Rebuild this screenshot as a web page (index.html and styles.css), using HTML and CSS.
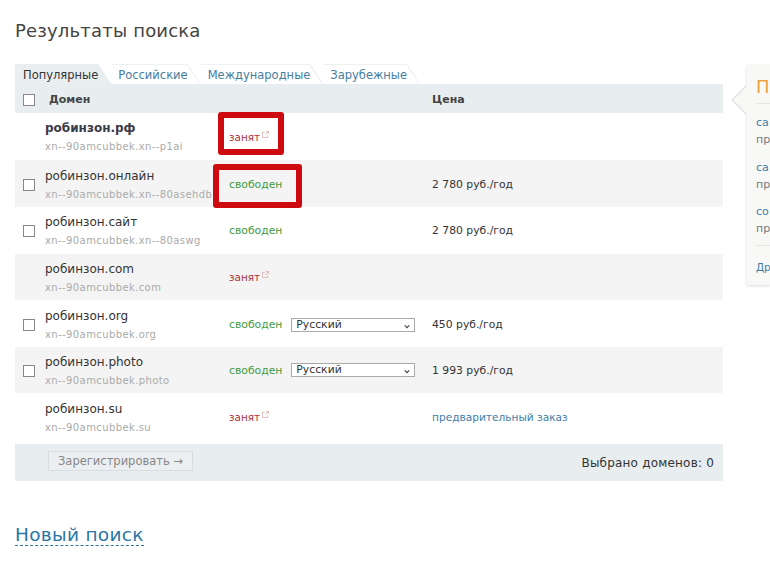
FILE: index.html
```html
<!DOCTYPE html>
<html lang="ru">
<head>
    <meta charset="UTF-8">
    <title>Результаты поиска</title>
    <link rel="stylesheet" href="styles.css">
</head>
<body>
    <div class="page">
        <h1>Результаты поиска</h1>
        <div class="columns">
            <div class="results">
                <div class="tabs">
                    <div class="tab active">Популярные</div>
                    <div class="tab">Российские</div>
                    <div class="tab">Международные</div>
                    <div class="tab">Зарубежные</div>
                </div>
                <div class="row head">
                    <span class="check"></span>
                    <div class="cell-domain">Домен</div>
                    <div></div>
                    <div>Цена</div>
                </div>
                <div class="row">
                    <div></div>
                    <div class="cell-domain"><b class="name bold">робинзон.рф</b><span class="puny">xn--90amcubbek.xn--p1ai</span></div>
                    <div class="status">
                        <span class="taken">занят</span>
                        <svg class="ext" viewBox="0 0 8 8"><path d="M3 1.5H.5v6h6V5M4.5.5h3v3M7.5.5 3.5 4.5" /></svg>
                        <span class="mark mark-one"></span>
                    </div>
                    <div></div>
                </div>
                <div class="row alt low">
                    <span class="check"></span>
                    <div class="cell-domain"><b class="name">робинзон.онлайн</b><span class="puny">xn--90amcubbek.xn--80asehdb</span></div>
                    <div class="status">
                        <span class="free">свободен</span>
                        <span class="mark mark-two"></span>
                    </div>
                    <div>2 780 руб./год</div>
                </div>
                <div class="row">
                    <span class="check"></span>
                    <div class="cell-domain"><b class="name">робинзон.сайт</b><span class="puny">xn--90amcubbek.xn--80aswg</span></div>
                    <div class="status"><span class="free">свободен</span></div>
                    <div>2 780 руб./год</div>
                </div>
                <div class="row alt tight">
                    <div></div>
                    <div class="cell-domain"><b class="name">робинзон.com</b><span class="puny">xn--90amcubbek.com</span></div>
                    <div class="status">
                        <span class="taken">занят</span>
                        <svg class="ext" viewBox="0 0 8 8"><path d="M3 1.5H.5v6h6V5M4.5.5h3v3M7.5.5 3.5 4.5" /></svg>
                    </div>
                    <div></div>
                </div>
                <div class="row low">
                    <span class="check"></span>
                    <div class="cell-domain"><b class="name">робинзон.org</b><span class="puny">xn--90amcubbek.org</span></div>
                    <div class="status">
                        <span class="free">свободен</span>
                        <div class="lang">
                            <select><option>Русский</option></select>
                            <svg viewBox="0 0 8 6"><path d="M1 1.500 4 4.500 7 1.500" /></svg>
                        </div>
                    </div>
                    <div>450 руб./год</div>
                </div>
                <div class="row alt tight">
                    <span class="check"></span>
                    <div class="cell-domain"><b class="name">робинзон.photo</b><span class="puny">xn--90amcubbek.photo</span></div>
                    <div class="status">
                        <span class="free">свободен</span>
                        <div class="lang">
                            <select><option>Русский</option></select>
                            <svg viewBox="0 0 8 6"><path d="M1 1.500 4 4.500 7 1.500" /></svg>
                        </div>
                    </div>
                    <div>1 993 руб./год</div>
                </div>
                <div class="row last">
                    <div></div>
                    <div class="cell-domain"><b class="name">робинзон.su</b><span class="puny">xn--90amcubbek.su</span></div>
                    <div class="status">
                        <span class="taken">занят</span>
                        <svg class="ext" viewBox="0 0 8 8"><path d="M3 1.5H.5v6h6V5M4.5.5h3v3M7.5.5 3.5 4.5" /></svg>
                    </div>
                    <div><a class="preorder">предварительный заказ</a></div>
                </div>
                <div class="foot">
                    <button>Зарегистрировать →</button>
                    <div class="count">Выбрано доменов: 0</div>
                </div>
            </div>
            <div class="side">
                <h3>П</h3>
                <ul>
                    <li><a>са</a><span>пр</span></li>
                    <li><a>са</a><span>пр</span></li>
                    <li><a>со</a><span>пр</span></li>
                </ul>
                <a class="more">Др</a>
            </div>
        </div>
        <h2><a>Новый поиск</a></h2>
    </div>
</body>
</html>
```

FILE: styles.css
```css
html, body {
    margin: 0;
    height: 576px;
    overflow: hidden;
    background: #fff;
}
body {
    font-family: "DejaVu Sans", Verdana, sans-serif;
    font-size: 10px;
    color: #333;
}
.page {
    padding: 20px 0 0 15px;
}
h1 {
    margin: 0 0 23px;
    height: 21px;
    font-size: 18px;
    line-height: 21px;
    font-weight: normal;
    color: #444;
    letter-spacing: 0.18px;
}
.columns {
    display: flex;
    align-items: flex-start;
    gap: 24px;
}
.results {
    flex: none;
    width: 708px;
}
.tabs {
    display: flex;
    height: 20px;
}
.tab {
    padding: 0 13px 0 7px;
    line-height: 21px;
    font-size: 11.5px;
    color: #467d9e;
    border-top: 1px solid #eef1f2;
    background: linear-gradient(to top right, transparent calc(50% - 1px), #e4e7e8 50%, transparent calc(50% + 1px)) no-repeat right top / 13px 100%;
    clip-path: polygon(0 0, calc(100% - 13px) 0, 100% 100%, 0 100%);
}
.tab.active {
    padding-left: 8px;
    color: #333;
    background: #e9eef0;
    border-color: #e9eef0;
}
.row {
    display: grid;
    grid-template-columns: 30px 183px 204px 1fr;
    align-items: center;
    box-sizing: border-box;
    height: 47px;
    font-size: 10.8px;
    color: #333;
}
.row.low {
    padding-top: 2px;
}
.row.tight {
    height: 46px;
}
.row.alt {
    background: #f4f4f4;
}
.row.last {
    height: 51px;
    padding-bottom: 3px;
}
.row.head {
    height: 29px;
    padding-top: 1px;
    background: #e8edf0;
    font-size: 11px;
    font-weight: bold;
    color: #444;
}
.check {
    width: 10px;
    height: 10px;
    margin: 1px 0 0 8px;
    border: 1px solid #888;
    background: #fff;
}
.cell-domain {
    display: flex;
    flex-direction: column;
}
.row.head .cell-domain {
    padding-left: 4px;
}
.name {
    font-size: 12px;
    line-height: 15px;
    font-weight: normal;
    color: #333;
}
.name.bold {
    font-weight: bold;
    color: #3a3a48;
}
.puny {
    margin-top: 5px;
    font-size: 10px;
    line-height: 11px;
    color: #aaa;
    letter-spacing: 0.4px;
    white-space: nowrap;
}
.status {
    position: relative;
    display: flex;
    align-items: center;
    height: 100%;
    padding-left: 1px;
}
.taken {
    font-size: 10.4px;
    color: #a8323c;
}
.free {
    color: #3f9b3f;
}
.ext {
    width: 7px;
    height: 7px;
    margin: 0 0 5px 2px;
    fill: none;
    stroke: #d9a0a0;
    stroke-width: 0.8;
}
.mark {
    position: absolute;
    box-sizing: border-box;
    border: 6px solid #cc0a0f;
    border-radius: 3px;
}
.mark-one {
    left: -10px;
    top: -1px;
    width: 66px;
    height: 43px;
}
.mark-two {
    left: -15px;
    top: 2px;
    width: 89px;
    height: 44px;
}
.lang {
    position: relative;
    margin-left: 9px;
    height: 14px;
}
.lang select {
    appearance: none;
    display: block;
    box-sizing: border-box;
    width: 124px;
    height: 14px;
    padding: 0 0 0 4px;
    border: 1px solid #aaa;
    border-radius: 0;
    background: #fff;
    font-family: inherit;
    font-size: 10.8px;
    line-height: 12px;
    color: #333;
}
.lang svg {
    position: absolute;
    right: 5px;
    top: 6px;
    width: 6px;
    height: 5px;
    fill: none;
    stroke: #444;
    stroke-width: 1.6;
}
.preorder {
    font-size: 10.6px;
    color: #3d7ea6;
}
.foot {
    display: flex;
    justify-content: space-between;
    align-items: center;
    height: 37px;
    padding: 0 9px 0 33px;
    background: #e8edf0;
}
.foot button {
    height: 20px;
    margin-bottom: 3px;
    padding: 0 9px;
    border: 1px solid #d8dcde;
    background: #eceff1;
    font-family: inherit;
    font-size: 11.5px;
    color: #888;
}
.count {
    font-size: 12px;
    letter-spacing: 0.2px;
    color: #333;
}
.side {
    position: relative;
    flex: none;
    box-sizing: border-box;
    width: 23px;
    height: 220px;
    margin-top: 1px;
    padding: 13px 0 0 9px;
    background: #f8f8f7;
    box-shadow: 0 1px 3px rgba(0, 0, 0, 0.15);
}
.side::before {
    content: "";
    position: absolute;
    left: -10px;
    top: 25px;
    width: 20px;
    height: 20px;
    background: #f8f8f7;
    transform: rotate(45deg);
    box-shadow: -1px 1px 1px rgba(0, 0, 0, 0.15);
}
.side h3 {
    position: relative;
    margin: 0;
    padding-bottom: 7px;
    border-bottom: 1px solid #e6e6e6;
    font-size: 18px;
    line-height: 18px;
    font-weight: normal;
    color: #e8a33d;
}
.side ul {
    position: relative;
    margin: 0;
    padding: 10px 0 8px;
    list-style: none;
    border-bottom: 1px solid #e6e6e6;
}
.side li {
    display: flex;
    flex-direction: column;
    margin-bottom: 10.500px;
    font-size: 11px;
    line-height: 17px;
    color: #777;
}
.side li:last-child {
    margin-bottom: 0;
}
.side a {
    color: #3d7ea6;
}
.side .more {
    position: relative;
    display: block;
    margin-top: 15px;
    font-size: 10.4px;
    line-height: 12px;
}
h2 {
    margin: 43px 0 0;
    font-size: 18.5px;
    line-height: 22px;
    font-weight: normal;
}
h2 a {
    color: #2a76a5;
    border-bottom: 1px dashed #2a76a5;
    letter-spacing: 0.3px;
}
```
